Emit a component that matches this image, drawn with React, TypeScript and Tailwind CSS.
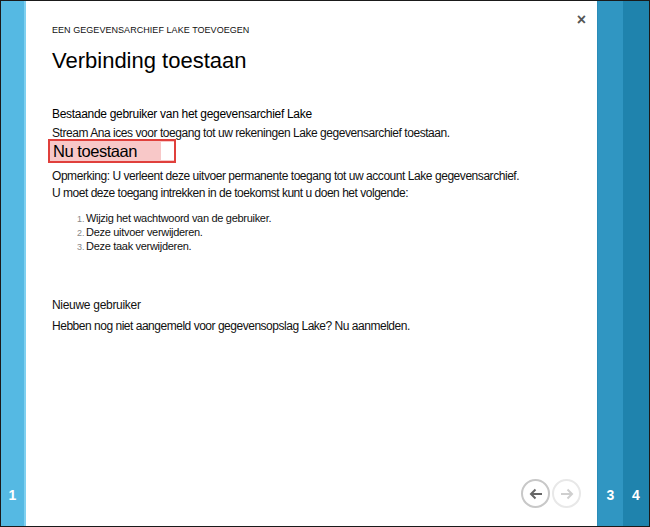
import React from "react";

const font = { fontFamily: '"Liberation Sans", Arial, sans-serif' };

export default function App() {
  return (
    <div
      className="w-[650px] h-[527px] border border-[#1a1a1a] flex bg-white overflow-hidden"
      style={font}
    >
      {/* left panel */}
      <div className="w-[25px] h-full bg-[#55b9e3] border-r-2 border-[#7fd0f0] flex flex-col justify-end items-center pb-[24px] shrink-0">
        <span className="text-white font-bold text-[14px] leading-none">1</span>
      </div>

      {/* main */}
      <div className="flex-1 h-full relative flex flex-col pl-[26px] pt-[25px]">
        <button className="absolute right-[11px] top-[11px] text-[#555] text-[16px] font-bold leading-none">
          ×
        </button>
        <div className="text-[9px] text-[#111] leading-none tracking-[0.05px]">
          EEN GEGEVENSARCHIEF LAKE TOEVOEGEN
        </div>
        <div className="text-[22px] text-black leading-none mt-[15px]">
          Verbinding toestaan
        </div>
        <div className="text-[12px] text-black leading-none mt-[36px] tracking-[-0.3px]">
          Bestaande gebruiker van het gegevensarchief Lake
        </div>
        <div className="text-[12px] text-[#111] leading-none mt-[7px] tracking-[-0.45px]">
          Stream Ana ices voor toegang tot uw rekeningen Lake gegevensarchief toestaan.
        </div>
        <div className="mt-[0px] -ml-[4px] w-[128px] h-[24px] border-2 border-[#e0403c] bg-[#f8c8c8] flex items-center pl-[3px] relative">
          <span className="text-[16.5px] text-black leading-none tracking-[-0.45px]">Nu toestaan</span>
          <div className="absolute right-0 top-[1px] bottom-[1px] w-[13px] bg-white" />
        </div>
        <div className="text-[12px] text-[#111] leading-none mt-[7px] tracking-[-0.45px]">
          Opmerking: U verleent deze uitvoer permanente toegang tot uw account Lake gegevensarchief.
        </div>
        <div className="text-[12px] text-[#111] leading-none mt-[5px] tracking-[-0.48px]">
          U moet deze toegang intrekken in de toekomst kunt u doen het volgende:
        </div>
        <ol className="mt-[14px] ml-[25px] flex flex-col gap-[3px]">
          {["Wijzig het wachtwoord van de gebruiker.", "Deze uitvoer verwijderen.", "Deze taak verwijderen."].map(
            (t, i) => (
              <li key={i} className="flex items-baseline leading-none">
                <span className="text-[9px] text-[#888] w-[9px]">{i + 1}.</span>
                <span className="text-[11px] text-[#111] tracking-[-0.3px]">{t}</span>
              </li>
            )
          )}
        </ol>
        <div className="text-[12px] text-[#111] leading-none mt-[47px] tracking-[-0.3px]">
          Nieuwe gebruiker
        </div>
        <div className="text-[12px] text-[#111] leading-none mt-[9px] tracking-[-0.48px]">
          Hebben nog niet aangemeld voor gegevensopslag Lake? Nu aanmelden.
        </div>

        {/* nav buttons */}
        <div className="absolute right-[16px] bottom-[18px] flex gap-[2px]">
          <div className="w-[29px] h-[29px] rounded-full border-2 border-[#c8c8c8] flex items-center justify-center">
            <svg width="14" height="12" viewBox="0 0 14 12">
              <path d="M13 6H2M6.5 1.5L2 6l4.5 4.5" stroke="#666" strokeWidth="2" fill="none" />
            </svg>
          </div>
          <div className="w-[29px] h-[29px] rounded-full border-2 border-[#e8e8e8] flex items-center justify-center">
            <svg width="14" height="12" viewBox="0 0 14 12">
              <path d="M1 6h11M7.5 1.5L12 6l-4.5 4.5" stroke="#cfcfcf" strokeWidth="2" fill="none" />
            </svg>
          </div>
        </div>
      </div>

      {/* right panels */}
      <div className="w-[26px] h-full bg-[#3096c2] border-l border-[#2a8cb8] flex flex-col justify-end items-center pb-[24px] shrink-0">
        <span className="text-white font-bold text-[14px] leading-none">3</span>
      </div>
      <div className="w-[26px] h-full bg-[#1f83ad] flex flex-col justify-end items-center pb-[24px] shrink-0">
        <span className="text-white font-bold text-[14px] leading-none">4</span>
      </div>
    </div>
  );
}
